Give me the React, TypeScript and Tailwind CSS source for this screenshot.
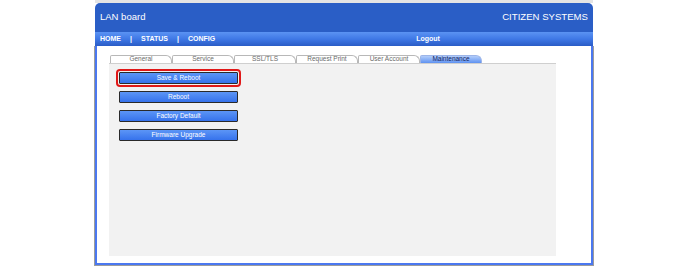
const tabs = ["General", "Service", "SSL/TLS", "Request Print", "User Account", "Maintenance"];
const buttons = ["Save & Reboot", "Reboot", "Factory Default", "Firmware Upgrade"];

export default function App() {
  return (
    <div className="w-full h-[266px] bg-white font-['Liberation_Sans',Arial,sans-serif]">
      <div className="mx-auto w-[500px] h-[266px] flex flex-col">
        {/* thin strip above the header */}
        <div className="h-[3px] bg-[#e4e4e4] mx-[1px]" />

        {/* Title bar */}
        <div className="h-[29px] mx-[1px] bg-[#2a5ec6] rounded-tl-[5px] rounded-tr-[5px] flex items-center justify-between pl-[5px] pr-[5px]">
          <span className="text-white text-[9.5px]">LAN board</span>
          <span className="text-white text-[9.6px]">CITIZEN SYSTEMS</span>
        </div>

        {/* Navigation */}
        <div className="h-[14px] mx-[1px] bg-gradient-to-b from-[#5b93f3] via-[#3f78e6] to-[#2a5cc6] flex items-center pl-[5px] text-white text-[7px] font-bold">
          <div className="flex items-center gap-[9px]">
            <span>HOME</span>
            <span>|</span>
            <span>STATUS</span>
            <span>|</span>
            <span>CONFIG</span>
          </div>
          <span className="ml-[201px]">Logout</span>
        </div>

        {/* Body */}
        <div className="flex-1 border-x border-b border-[#9c9c9c]">
          <div className="h-full border-x-2 border-b-2 border-[#4b78f0] bg-white pl-[12px] pt-[9px]">
            {/* Tabs */}
            <div className="flex h-[8px] ml-[1px]">
              {tabs.map((t) => {
                const active = t === "Maintenance";
                return (
                  <div
                    key={t}
                    className={
                      active
                        ? "w-[62px] h-[8px] rounded-tl-[2px] rounded-tr-[6px] border-t border-x border-[#9db5e8] bg-gradient-to-b from-[#b3cdfa] to-[#5f92f1] flex items-center justify-center text-[6.5px] text-[#14245e] leading-none"
                        : "w-[62px] h-[8px] rounded-tl-[2px] rounded-tr-[6px] border-t border-x border-[#b8b8b8] bg-white flex items-center justify-center text-[6.5px] text-[#6a6a6a] leading-none"
                    }
                  >
                    {t}
                  </div>
                );
              })}
            </div>

            {/* Panel */}
            <div className="w-[447px] h-[193px] bg-[#f2f2f2] border-t border-[#cfcfcf] pl-[10px] pt-[8px]">
              <div className="flex flex-col gap-[7px]">
                {buttons.map((b, i) => (
                  <div
                    key={b}
                    className={
                      i === 0
                        ? "w-[119px] h-[12px] rounded-[1px] border border-[#2a2a2a] bg-gradient-to-b from-[#5c95f6] to-[#3672ec] flex items-center justify-center text-white text-[6.5px] leading-none outline-2 outline-[#e01818] outline-offset-[1px]"
                        : "w-[119px] h-[12px] rounded-[1px] border border-[#2a2a2a] bg-gradient-to-b from-[#5c95f6] to-[#3672ec] flex items-center justify-center text-white text-[6.5px] leading-none"
                    }
                  >
                    {b}
                  </div>
                ))}
              </div>
            </div>
          </div>
        </div>
      </div>
    </div>
  );
}
